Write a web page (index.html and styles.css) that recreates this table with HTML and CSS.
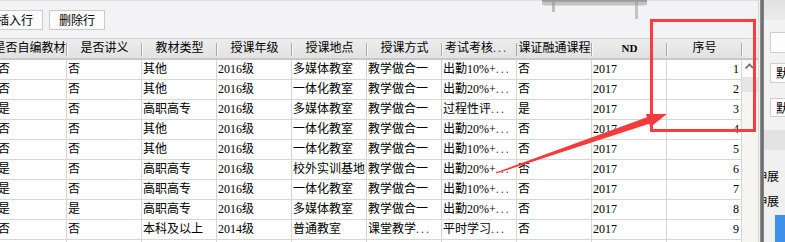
FILE: index.html
```html
<!DOCTYPE html>
<html lang="zh-CN">
<head>
<meta charset="utf-8">
<title>教材信息</title>
<link rel="stylesheet" href="styles.css">
</head>
<body>
<div class="screen">
  <div class="main">
    <div class="toolbar">
      <button class="btn">插入行</button>
      <button class="btn">删除行</button>
    </div>
    <div class="grid">
      <div class="table">
        <div class="row head">
          <div class="hc">是否自编教材</div>
          <div class="hc">是否讲义</div>
          <div class="hc">教材类型</div>
          <div class="hc">授课年级</div>
          <div class="hc">授课地点</div>
          <div class="hc">授课方式</div>
          <div class="hc left">考试考核<span class="dots">...</span></div>
          <div class="hc">课证融通课程</div>
          <div class="hc nd">ND</div>
          <div class="hc">序号</div>
        </div>
        <div class="row"><div class="c c1">否</div><div class="c">否</div><div class="c">其他</div><div class="c">2016级</div><div class="c">多媒体教室</div><div class="c">教学做合一</div><div class="c">出勤10%+<span class="dots">...</span></div><div class="c">否</div><div class="c">2017</div><div class="c num">1</div></div>
        <div class="row"><div class="c c1">否</div><div class="c">否</div><div class="c">其他</div><div class="c">2016级</div><div class="c">一体化教室</div><div class="c">教学做合一</div><div class="c">出勤20%+<span class="dots">...</span></div><div class="c">否</div><div class="c">2017</div><div class="c num">2</div></div>
        <div class="row"><div class="c c1">是</div><div class="c">否</div><div class="c">高职高专</div><div class="c">2016级</div><div class="c">多媒体教室</div><div class="c">教学做合一</div><div class="c">过程性评<span class="dots">...</span></div><div class="c">是</div><div class="c">2017</div><div class="c num">3</div></div>
        <div class="row"><div class="c c1">否</div><div class="c">否</div><div class="c">其他</div><div class="c">2016级</div><div class="c">一体化教室</div><div class="c">教学做合一</div><div class="c">出勤20%+<span class="dots">...</span></div><div class="c">否</div><div class="c">2017</div><div class="c num">4</div></div>
        <div class="row"><div class="c c1">否</div><div class="c">否</div><div class="c">其他</div><div class="c">2016级</div><div class="c">一体化教室</div><div class="c">教学做合一</div><div class="c">出勤10%+<span class="dots">...</span></div><div class="c">否</div><div class="c">2017</div><div class="c num">5</div></div>
        <div class="row"><div class="c c1">是</div><div class="c">否</div><div class="c">高职高专</div><div class="c">2016级</div><div class="c">校外实训基地</div><div class="c">教学做合一</div><div class="c">出勤20%+<span class="dots">...</span></div><div class="c">否</div><div class="c">2017</div><div class="c num">6</div></div>
        <div class="row"><div class="c c1">是</div><div class="c">否</div><div class="c">高职高专</div><div class="c">2016级</div><div class="c">一体化教室</div><div class="c">教学做合一</div><div class="c">出勤10%+<span class="dots">...</span></div><div class="c">否</div><div class="c">2017</div><div class="c num">7</div></div>
        <div class="row"><div class="c c1">是</div><div class="c">是</div><div class="c">高职高专</div><div class="c">2016级</div><div class="c">多媒体教室</div><div class="c">教学做合一</div><div class="c">出勤20%+<span class="dots">...</span></div><div class="c">否</div><div class="c">2017</div><div class="c num">8</div></div>
        <div class="row"><div class="c c1">否</div><div class="c">否</div><div class="c">本科及以上</div><div class="c">2014级</div><div class="c">普通教室</div><div class="c">课堂教学<span class="dots">...</span></div><div class="c">平时学习<span class="dots">...</span></div><div class="c">否</div><div class="c">2017</div><div class="c num">9</div></div>
        <div class="row"><div class="c c1"></div><div class="c"></div><div class="c"></div><div class="c"></div><div class="c"></div><div class="c"></div><div class="c"></div><div class="c"></div><div class="c"></div><div class="c num"></div></div>
      </div>
      <div class="vscroll">
        <div class="vs-head"></div>
        <div class="vs-up"><svg width="16" height="17" viewBox="0 0 16 17"><polyline points="3.5,8.5 7.5,4.5 11,8" fill="none" stroke="#666" stroke-width="1.6"/></svg></div>
        <div class="vs-thumb"></div>
        <div class="vs-track"></div>
      </div>
    </div>
  </div>
  <div class="divider"></div>
  <div class="side">
    <div class="side-top"></div>
    <div class="side-body">
      <div class="sbox b1"></div>
      <div class="sbox b2">默认</div>
      <div class="sbox b3">默认</div>
    </div>
    <div class="side-band"></div>
    <div class="side-lower">
      <div class="sline">伸展</div>
      <div class="sline">伸展</div>
      <div class="sblue"></div>
    </div>
  </div>

  <svg class="sketch" width="140" height="24" viewBox="0 0 140 24">
    <rect x="2" y="0" width="105" height="5" fill="#8c8c8c" opacity="0.45"/>
    <rect x="2" y="0" width="105" height="2" fill="#6f6f6f" opacity="0.4"/>
    <rect x="12" y="2" width="3" height="10" fill="#8a8a8a" opacity="0.5"/>
    <rect x="95" y="2" width="3" height="17" fill="#8a8a8a" opacity="0.45"/>
    <rect x="4" y="5" width="100" height="1" fill="#aaa" opacity="0.35"/>
  </svg>
  <div class="redbox"></div>
  <svg class="arrow" width="785" height="242" viewBox="0 0 785 242">
    <polygon points="496.2,173.6 649.2,123.8 650.4,127.1 667,114 645.8,113.9 647,117.2 495.8,172.4" fill="#f43a3a"/>
  </svg>
</div>
</body>
</html>
```

FILE: styles.css
```css
html, body {
  margin: 0;
  padding: 0;
}
body {
  background: #f3f3f5;
  font-family: "Liberation Serif", "Noto Sans CJK SC", serif;
  font-size: 12px;
  color: #000;
}
.screen {
  position: relative;
  width: 785px;
  height: 242px;
  overflow: hidden;
  display: flex;
}
.main {
  width: 758px;
  flex: none;
  overflow: hidden;
  border-top: 1px solid #e0e0e2;
  box-sizing: border-box;
  display: flex;
  flex-direction: column;
}
.toolbar {
  height: 37px;
  flex: none;
  box-sizing: border-box;
  padding-top: 9px;
  margin-left: -13px;
  display: flex;
  gap: 6px;
  align-items: flex-start;
}
.btn {
  width: 56px;
  height: 20px;
  padding: 0;
  margin: 0;
  border: 1px solid #cbcbcb;
  border-radius: 0;
  background: #fcfcfc;
  font-family: "Noto Sans CJK SC", sans-serif;
  font-size: 12px;
  line-height: 18px;
  color: #000;
}
.grid {
  flex: 1;
  display: flex;
  overflow: hidden;
}
.table {
  width: 750px;
  flex: none;
  margin-left: -8px;
}
.row {
  display: grid;
  grid-template-columns: repeat(10, 75px);
  height: 20px;
}
.head {
  height: 22px;
  box-sizing: border-box;
  border-top: 1px solid #d4d4d4;
  border-bottom: 2px solid #c8c8c8;
  background: linear-gradient(#ececec, #e2e2e2);
}
.hc {
  position: relative;
  height: 19px;
  line-height: 19px;
  text-align: center;
  white-space: nowrap;
  overflow: visible;
}
.hc::after {
  content: "";
  position: absolute;
  right: -1px;
  top: 4px;
  bottom: 2px;
  width: 2px;
  background: linear-gradient(to right, #a9a9a9 50%, #f7f7f7 50%);
}
.hc.left {
  text-align: left;
  padding-left: 3px;
  overflow: hidden;
}
.hc.nd {
  font-weight: bold;
  font-size: 11px;
}
.c {
  box-sizing: border-box;
  height: 20px;
  line-height: 19px;
  background: #fff;
  border-right: 1px solid #d6d6d6;
  border-bottom: 1px solid #d6d6d6;
  padding-left: 1px;
  white-space: nowrap;
  overflow: hidden;
}
.c.c1 {
  padding-left: 6px;
}
.c.num {
  text-align: right;
  padding-right: 2px;
}
.dots {
  letter-spacing: 2px;
  color: #4d2f78;
}
.vscroll {
  width: 16px;
  flex: none;
  display: flex;
  flex-direction: column;
  border-right: 1px solid #dcdcdc;
}
.vs-head {
  height: 22px;
  box-sizing: border-box;
  border-top: 1px solid #d4d4d4;
  border-bottom: 2px solid #c8c8c8;
  background: linear-gradient(#efefef, #e8e8e8);
}
.vs-up {
  height: 17px;
  background: #fafafa;
}
.vs-up svg {
  display: block;
}
.vs-thumb {
  height: 15px;
  background: #e6e6e6;
}
.vs-track {
  flex: 1;
  background: #f6f5f1;
}
.divider {
  width: 6px;
  flex: none;
  background: linear-gradient(to right, #d6d6d6 0 1px, #f1f1f1 1px 2px, #9a9a9a 2px, #646464 4px, #8c8c8c 6px);
}
.side {
  flex: 1;
  display: flex;
  flex-direction: column;
  background: #f0f0f0;
  overflow: hidden;
  font-family: "Noto Sans CJK SC", sans-serif;
}
.side-top {
  height: 20px;
  flex: none;
  background: linear-gradient(#e2e2e2, #ebebeb);
}
.side-body {
  height: 110px;
  flex: none;
  background: #f2f2f2;
  padding-left: 6px;
  box-sizing: border-box;
  overflow: hidden;
}
.sbox {
  width: 40px;
  box-sizing: border-box;
  background: #fdfdfd;
  border: 1px solid #cfcfcf;
  padding-left: 5px;
  white-space: nowrap;
  font-size: 12px;
}
.b1 {
  margin-top: 12px;
  height: 21px;
}
.b2 {
  margin-top: 10px;
  height: 20px;
  line-height: 18px;
}
.b3 {
  margin-top: 15px;
  height: 19px;
  line-height: 17px;
}
.side-band {
  height: 20px;
  flex: none;
  background: #e3e3e3;
}
.side-lower {
  flex: 1;
  padding-top: 13px;
  box-sizing: border-box;
}
.sline {
  height: 25px;
  line-height: 25px;
  margin-left: -9px;
  white-space: nowrap;
  font-size: 12px;
}
.sblue {
  margin-top: 2px;
  margin-left: 11px;
  height: 27px;
  background: #3d8fea;
}
.sketch {
  position: absolute;
  left: 540px;
  top: 0;
  pointer-events: none;
}
.redbox {
  position: absolute;
  left: 650px;
  top: 19px;
  width: 106px;
  height: 113px;
  box-sizing: border-box;
  border: 3px solid #fb3d3d;
  pointer-events: none;
}
.arrow {
  position: absolute;
  left: 0;
  top: 0;
  pointer-events: none;
}
```
